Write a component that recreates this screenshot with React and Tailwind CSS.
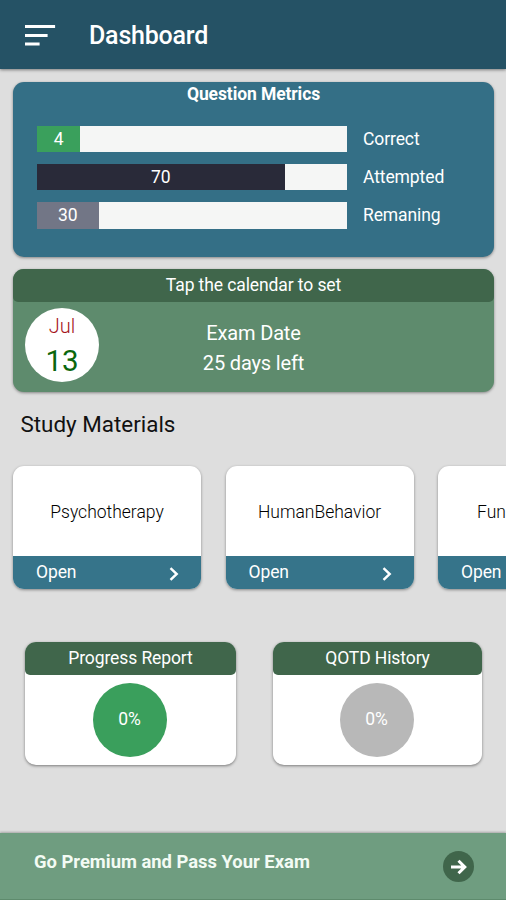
import React from "react";

const metrics = [
  { label: "Correct", value: 4, width: 43, color: "bg-[#3aa05c]" },
  { label: "Attempted", value: 70, width: 247.5, color: "bg-[#292a39]" },
  { label: "Remaning", value: 30, width: 61.5, color: "bg-[#727686]" },
];

const materials = ["Psychotherapy", "HumanBehavior", "Fundamentals"];

const reports = [
  { title: "Progress Report", value: "0%", color: "bg-[#3a9f5c]", size: "w-[211px]" },
  { title: "QOTD History", value: "0%", color: "bg-[#b8b8b8]", size: "w-[209px]" },
];

function Header() {
  return (
    <header className="h-[69px] shrink-0 flex items-start bg-[#255265] pl-[25px] text-white shadow-[0_1px_3px_rgba(0,0,0,0.45)]">
      <svg className="mt-[24px] w-[31px] h-[22px]" viewBox="0 0 31 22" stroke="#fff" strokeWidth="3.2" strokeLinecap="square">
        <path d="M1.5 2.5h27M1.5 11.5h19.5M1.5 20h11.5" />
      </svg>
      <h1 className="ml-[33px] mt-[18px] text-[25px] leading-[36px] font-medium tracking-[-0.2px]">Dashboard</h1>
    </header>
  );
}

function QuestionMetrics() {
  return (
    <section className="h-[175px] rounded-[11px] bg-[#346f86] px-[24px] text-white shadow-[0_1px_3px_rgba(0,0,0,0.4)]">
      <h2 className="h-[44px] pt-[1px] text-center text-[17.5px] leading-[22px] font-bold tracking-[-0.1px]">Question Metrics</h2>
      <div className="flex flex-col gap-[12px]">
        {metrics.map(m => (
          <div key={m.label} className="flex h-[26.2px] items-center tracking-[-0.1px]">
            <div className="h-full w-[310px] bg-[#f5f6f5]">
              <div className={`flex h-full items-center justify-center text-[17.5px] ${m.color}`} style={{ width: m.width }}>
                {m.value}
              </div>
            </div>
            <span className="ml-[16px] text-[17.5px]">{m.label}</span>
          </div>
        ))}
      </div>
    </section>
  );
}

function ExamDate() {
  return (
    <section className="mt-[12px] h-[123px] overflow-hidden rounded-[11px] bg-[#5e8b6d] text-white shadow-[0_1px_3px_rgba(0,0,0,0.4)]">
      <h2 className="h-[33px] rounded-b-[5px] bg-[#40664b] text-center text-[17.5px] leading-[33px] tracking-[-0.1px]">Tap the calendar to set</h2>
      <div className="flex h-[90px] px-[12px] pt-[6px]">
        <div className="flex size-[74px] flex-col items-center rounded-full bg-white pt-[5px]">
          <span className="text-[20px] leading-[26px] font-light text-[#a5151d]">Jul</span>
          <span className="mt-[4px] text-[29.5px] leading-[36px] text-[#0b670d]">13</span>
        </div>
        <div className="mr-[74px] flex-1 pt-[10px] text-center text-[20px] leading-[30px] tracking-[-0.15px]">
          <p>Exam Date</p>
          <p>25 days left</p>
        </div>
      </div>
    </section>
  );
}

function MaterialCard({ title }) {
  return (
    <div className="flex h-[123px] w-[188px] shrink-0 flex-col overflow-hidden rounded-[11px] bg-white shadow-[0_1px_3px_rgba(0,0,0,0.4)]">
      <p className="h-[90px] text-center text-[17.5px] leading-[92px] font-light text-black">{title}</p>
      <div className="flex h-[33px] items-center justify-between bg-[#36748a] pl-[23px] pr-[21px] text-white">
        <span className="text-[17.5px] tracking-[-0.1px]">Open</span>
        <svg className="mt-[2px] h-[14px] w-[12px]" viewBox="0 0 12 14" fill="none" stroke="#fff" strokeWidth="2.4">
          <path d="M2.5 1.2 8.7 7l-6.2 5.8" />
        </svg>
      </div>
    </div>
  );
}

function ReportCard({ title, value, color, size }) {
  return (
    <div className={`h-[123px] overflow-hidden rounded-[11px] bg-white text-white shadow-[0_1px_3px_rgba(0,0,0,0.45)] ${size}`}>
      <h2 className="h-[33px] rounded-b-[5px] bg-[#40664b] text-center text-[17.5px] leading-[33px] tracking-[-0.1px]">{title}</h2>
      <div className="pr-[1px]">
        <div className={`mx-auto mt-[8px] flex size-[74px] items-center justify-center rounded-full pb-[2px] pr-[1px] text-[17.5px] tracking-[-0.1px] ${color}`}>
          {value}
        </div>
      </div>
    </div>
  );
}

export default function App() {
  return (
    <div className="flex h-[900px] w-full flex-col overflow-hidden bg-[#dedede] font-[Roboto,sans-serif]">
      <Header />
      <main className="flex-1 pt-[13px]">
        <div className="ml-[13px] w-[481px]">
          <QuestionMetrics />
          <ExamDate />
        </div>
        <h2 className="ml-[20.5px] mt-[16px] text-[22.4px] leading-[32px] text-[#111]">Study Materials</h2>
        <div className="mt-[26px] flex gap-[24.5px] pl-[13px]">
          {materials.map(title => (
            <MaterialCard key={title} title={title} />
          ))}
        </div>
        <div className="mt-[53px] flex justify-between pl-[25px] pr-[24px]">
          {reports.map(r => (
            <ReportCard key={r.title} {...r} />
          ))}
        </div>
      </main>
      <footer className="flex h-[67px] shrink-0 justify-between border-b border-[#5e8b6d] bg-[#6f9d80] pl-[34px] pr-[32px] text-white shadow-[0_-1px_2px_rgba(0,0,0,0.25)]">
        <span className="mt-[18px] text-[18.4px] leading-[22px] font-bold text-[#f3fbf4]">Go Premium and Pass Your Exam</span>
        <div className="mt-[18px] flex size-[31px] items-center justify-center rounded-full bg-[#40664b]">
          <svg className="size-[18px]" viewBox="0 0 18 18" fill="none" stroke="#fff" strokeWidth="3">
            <path d="M1 9h14M8.5 2.8 14.8 9l-6.3 6.2" />
          </svg>
        </div>
      </footer>
    </div>
  );
}
